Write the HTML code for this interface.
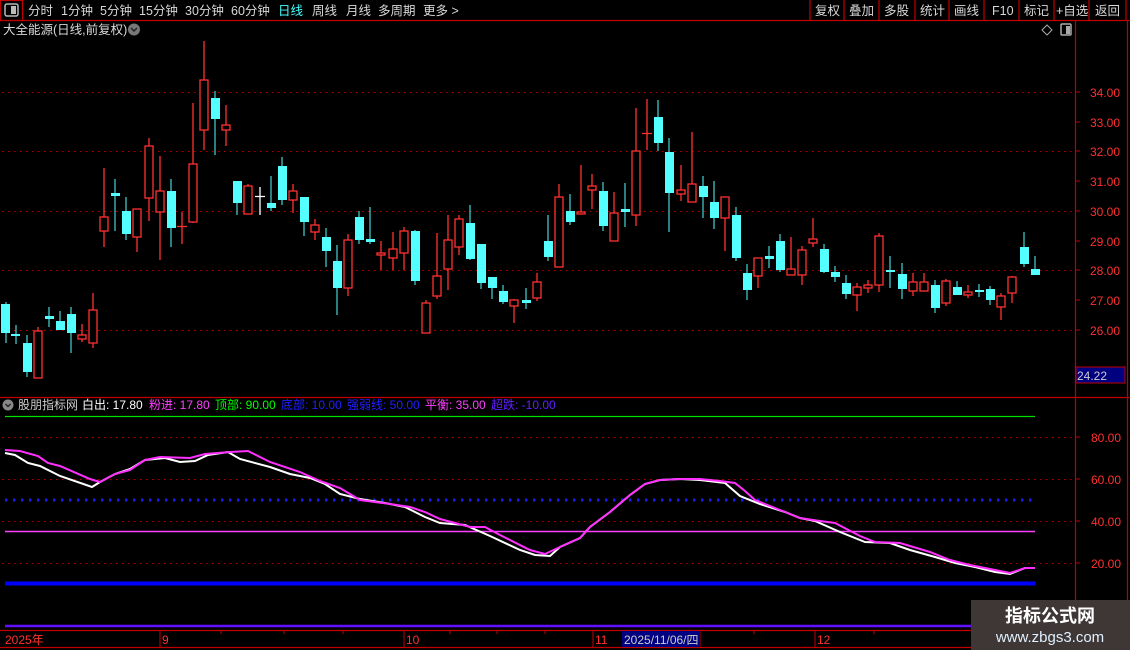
<!DOCTYPE html>
<html><head><meta charset="utf-8"><style>
body{margin:0;background:#000;width:1130px;height:650px;overflow:hidden;font-family:"Liberation Sans","Noto Sans CJK SC",sans-serif}
svg{display:block}
text{font-family:"Liberation Sans","Noto Sans CJK SC",sans-serif}
</style></head><body>
<svg width="1130" height="650" viewBox="0 0 1130 650" xmlns="http://www.w3.org/2000/svg">
<rect width="1130" height="650" fill="#000"/>
<!-- toolbar -->
<g stroke="#c00000" stroke-width="1.2" fill="none">
<line x1="0" y1="20.5" x2="1130" y2="20.5"/>
<rect x="0.5" y="0.5" width="22" height="20"/>
<line x1="810" y1="0" x2="810" y2="20"/><line x1="844" y1="0" x2="844" y2="20"/><line x1="879" y1="0" x2="879" y2="20"/><line x1="915" y1="0" x2="915" y2="20"/><line x1="949" y1="0" x2="949" y2="20"/><line x1="984" y1="0" x2="984" y2="20"/><line x1="1019" y1="0" x2="1019" y2="20"/><line x1="1054" y1="0" x2="1054" y2="20"/><line x1="1089" y1="0" x2="1089" y2="20"/><line x1="1126" y1="0" x2="1126" y2="20"/>
<line x1="1075.5" y1="20" x2="1075.5" y2="630"/>
<line x1="1127.5" y1="20" x2="1127.5" y2="630"/>
<line x1="0" y1="397.5" x2="1130" y2="397.5"/>
<line x1="0" y1="630.5" x2="1130" y2="630.5"/>
<line x1="0" y1="647.5" x2="1130" y2="647.5"/>
</g>
<rect x="5" y="4" width="13" height="12" rx="2" fill="none" stroke="#bbb" stroke-width="1.5"/><rect x="11" y="6" width="5" height="8" fill="#bbb"/>
<g font-size="12.5" fill="#d8d8d8">
<text x="28" y="15">分时</text><text x="61" y="15">1分钟</text><text x="100" y="15">5分钟</text><text x="139" y="15">15分钟</text><text x="185" y="15">30分钟</text><text x="231" y="15">60分钟</text><text x="278" y="15" fill="#4ff">日线</text><text x="312" y="15">周线</text><text x="346" y="15">月线</text><text x="378" y="15">多周期</text><text x="423" y="15">更多 &gt;</text>
<text x="815" y="15">复权</text><text x="849" y="15">叠加</text><text x="884" y="15">多股</text><text x="920" y="15">统计</text><text x="954" y="15">画线</text><text x="992" y="15">F10</text><text x="1024" y="15">标记</text><text x="1056" y="15">+自选</text><text x="1095" y="15">返回</text>
<text x="3" y="34">大全能源(日线,前复权)</text>
</g>
<circle cx="134" cy="29.5" r="6" fill="#777"/><path d="M131 28l3 3 3-3" stroke="#222" stroke-width="1.5" fill="none"/>
<path d="M1047 25l5 5-5 5-5-5z" fill="none" stroke="#aaa"/>
<rect x="1061" y="24" width="10" height="11" rx="1" fill="none" stroke="#aaa" stroke-width="1.5"/><rect x="1066" y="26" width="4" height="8" fill="#aaa"/>
<!-- price grid -->
<g stroke="#b00000" stroke-dasharray="1.5 4.5" stroke-width="1">
<line x1="2" y1="92.5" x2="1075" y2="92.5"/><line x1="2" y1="151.5" x2="1075" y2="151.5"/><line x1="2" y1="211.5" x2="1075" y2="211.5"/><line x1="2" y1="270.5" x2="1075" y2="270.5"/><line x1="2" y1="330.5" x2="1075" y2="330.5"/>
<line x1="2" y1="437.5" x2="1075" y2="437.5"/><line x1="2" y1="479.5" x2="1075" y2="479.5"/><line x1="2" y1="521.5" x2="1075" y2="521.5"/><line x1="2" y1="563.5" x2="1075" y2="563.5"/>
</g>
<g stroke="#c00000"><path d="M1075 92h5M1075 122h5M1075 151h5M1075 181h5M1075 211h5M1075 241h5M1075 270h5M1075 300h5M1075 330h5M1075 437h5M1075 479h5M1075 521h5M1075 563h5"/></g>
<g font-size="12" fill="#ff3030">
<text x="1090" y="97">34.00</text><text x="1090" y="127">33.00</text><text x="1090" y="156">32.00</text><text x="1090" y="186">31.00</text><text x="1090" y="216">30.00</text><text x="1090" y="246">29.00</text><text x="1090" y="275">28.00</text><text x="1090" y="305">27.00</text><text x="1090" y="335">26.00</text>
<text x="1091" y="442">80.00</text><text x="1091" y="484">60.00</text><text x="1091" y="526">40.00</text><text x="1091" y="568">20.00</text>
</g>
<rect x="1076" y="367" width="49" height="16" fill="#000080" stroke="#c00000"/>
<text x="1077" y="380" font-size="12" fill="#ccc">24.22</text>
<!-- cyan candles -->
<g stroke="#54ffff" stroke-width="1">
<path d="M6 302V343M16 325V344M27 335V377M49 307V327M60 311V330M71 307V353M115 179V231M126 197V240M171 179V247M215 91V155M237 181V215M271 176V211M282 157V205M304 197V236M326 228V267M337 245V315M359 211V244M370 207V244M415 230V285M470 205V260M481 244V289M492 277V299M503 285V304M526 288V309M548 215V261M570 194V225M603 182V231M625 183V227M658 100V151M669 138V232M703 176V218M714 181V229M736 207V261M747 264V300M769 246V268M780 234V272M824 244V273M835 266V282M846 275V299M890 256V288M902 263V299M935 280V313M957 281V295M979 284V297M990 286V305M1024 232V267M1035 256V275"/>
</g>
<g fill="#54ffff">
<rect x="1" y="304" width="9" height="29"/><rect x="11" y="334" width="9" height="2"/><rect x="23" y="343" width="9" height="29"/><rect x="45" y="316" width="9" height="3"/><rect x="56" y="321" width="9" height="9"/><rect x="67" y="314" width="9" height="19"/><rect x="111" y="193" width="9" height="3"/><rect x="122" y="211" width="9" height="23"/><rect x="167" y="191" width="9" height="37"/><rect x="211" y="98" width="9" height="21"/><rect x="233" y="181" width="9" height="22"/><rect x="267" y="203" width="9" height="5"/><rect x="278" y="166" width="9" height="34"/><rect x="300" y="197" width="9" height="25"/><rect x="322" y="237" width="9" height="14"/><rect x="333" y="261" width="9" height="27"/><rect x="355" y="217" width="9" height="23"/><rect x="366" y="239" width="9" height="3"/><rect x="411" y="231" width="9" height="50"/><rect x="466" y="223" width="9" height="36"/><rect x="477" y="244" width="9" height="39"/><rect x="488" y="277" width="9" height="11"/><rect x="499" y="291" width="9" height="11"/><rect x="522" y="300" width="9" height="3"/><rect x="544" y="241" width="9" height="16"/><rect x="566" y="211" width="9" height="11"/><rect x="599" y="191" width="9" height="35"/><rect x="621" y="209" width="9" height="3"/><rect x="654" y="117" width="9" height="26"/><rect x="665" y="152" width="9" height="41"/><rect x="699" y="186" width="9" height="11"/><rect x="710" y="202" width="9" height="16"/><rect x="732" y="215" width="9" height="43"/><rect x="743" y="273" width="9" height="17"/><rect x="765" y="256" width="9" height="3"/><rect x="776" y="241" width="9" height="29"/><rect x="820" y="249" width="9" height="23"/><rect x="831" y="272" width="9" height="5"/><rect x="842" y="283" width="9" height="11"/><rect x="886" y="270" width="9" height="2"/><rect x="898" y="274" width="9" height="15"/><rect x="931" y="285" width="9" height="23"/><rect x="953" y="287" width="9" height="8"/><rect x="975" y="290" width="9" height="2"/><rect x="986" y="289" width="9" height="11"/><rect x="1020" y="247" width="9" height="17"/><rect x="1031" y="269" width="9" height="6"/>
</g>
<!-- red candles -->
<g stroke="#ff3232" stroke-width="1.3">
<path d="M38 327V378M82 324V342M93 293V348M104 168V247M137 209V252M149 138V221M160 156V260M182 212V244M193 103V223M204 41V150M226 105V146M248 184V214M293 184V213M315 219V240M348 234V296M381 241V270M393 232V270M404 227V270M426 300V333M437 233V299M448 215V290M459 215V255M514 299V323M537 273V301M559 184V267M581 165V214M592 174V209M614 192V241M636 108V226M647 99V150M681 165V201M692 132V202M725 197V251M758 258V288M791 237V275M802 246V285M813 218V247M857 283V311M868 280V293M879 233V292M913 273V296M924 273V291M946 279V306M968 285V298M1001 293V320M1012 276V303"/>
<path d="M177 226.5h10M642 133.5h10"/>
</g>
<g stroke="#ff3232" stroke-width="1.3" fill="#000">
<rect x="34" y="331" width="8" height="47"/><rect x="78" y="335" width="8" height="4"/><rect x="89" y="310" width="8" height="33"/><rect x="100" y="217" width="8" height="14"/><rect x="133" y="209" width="8" height="28"/><rect x="145" y="146" width="8" height="52"/><rect x="156" y="191" width="8" height="21"/><rect x="189" y="164" width="8" height="58"/><rect x="200" y="80" width="8" height="50"/><rect x="222" y="125" width="8" height="5"/><rect x="244" y="186" width="8" height="28"/><rect x="289" y="191" width="8" height="9"/><rect x="311" y="225" width="8" height="7"/><rect x="344" y="240" width="8" height="48"/><rect x="377" y="253" width="8" height="2"/><rect x="389" y="249" width="8" height="9"/><rect x="400" y="231" width="8" height="22"/><rect x="422" y="303" width="8" height="30"/><rect x="433" y="276" width="8" height="20"/><rect x="444" y="240" width="8" height="29"/><rect x="455" y="219" width="8" height="28"/><rect x="510" y="300" width="8" height="6"/><rect x="533" y="282" width="8" height="16"/><rect x="555" y="197" width="8" height="70"/><rect x="577" y="212" width="8" height="2"/><rect x="588" y="186" width="8" height="4"/><rect x="610" y="213" width="8" height="28"/><rect x="632" y="151" width="8" height="64"/><rect x="677" y="190" width="8" height="4"/><rect x="688" y="184" width="8" height="18"/><rect x="721" y="197" width="8" height="21"/><rect x="754" y="258" width="8" height="18"/><rect x="787" y="269" width="8" height="6"/><rect x="798" y="250" width="8" height="25"/><rect x="809" y="239" width="8" height="4"/><rect x="853" y="287" width="8" height="8"/><rect x="864" y="285" width="8" height="3"/><rect x="875" y="236" width="8" height="49"/><rect x="909" y="282" width="8" height="9"/><rect x="920" y="282" width="8" height="9"/><rect x="942" y="281" width="8" height="22"/><rect x="964" y="292" width="8" height="3"/><rect x="997" y="296" width="8" height="11"/><rect x="1008" y="277" width="8" height="16"/>
</g>
<path d="M260 187V215M255 196.5h10" stroke="#fff" stroke-width="1.3"/>
<!-- indicator header -->
<circle cx="8" cy="405" r="5.5" fill="#888"/><path d="M5.5 404l2.5 2.5 2.5-2.5" stroke="#222" stroke-width="1.4" fill="none"/>
<text y="409" font-size="12"><tspan x="18" fill="#ccc">股朋指标网</tspan><tspan x="82" fill="#fff">白出: 17.80</tspan><tspan x="149" fill="#ff40ff">粉进: 17.80</tspan><tspan x="215" fill="#00ff00">顶部: 90.00</tspan><tspan x="281" fill="#2020ff">底部: 10.00</tspan><tspan x="347" fill="#2020ff">强弱线: 50.00</tspan><tspan x="425" fill="#ff40ff">平衡: 35.00</tspan><tspan x="491" fill="#6020ff">超跌: -10.00</tspan></text>
<!-- indicator lines -->
<line x1="5" y1="416.5" x2="1035" y2="416.5" stroke="#00e000" stroke-width="1.3"/>
<line x1="5" y1="500" x2="1035" y2="500" stroke="#1a1aff" stroke-width="3" stroke-dasharray="2.5 5.5"/>
<line x1="5" y1="531.5" x2="1035" y2="531.5" stroke="#ff40ff" stroke-width="1.5"/>
<line x1="5" y1="583.5" x2="1035" y2="583.5" stroke="#0000ff" stroke-width="4"/>
<line x1="5" y1="626" x2="1035" y2="626" stroke="#6010ff" stroke-width="2.5"/>
<polyline fill="none" stroke="#fff" stroke-width="2" points="5,453 15,455 28,463 40,466 60,476 92,487 100,482 115,474 130,469 145,460 165,458 180,462 195,461 208,455 228,452 240,459 270,467 290,474 310,478 325,484 340,494 360,499 385,503 405,507 425,517 440,523 465,525 490,536 520,550 535,555 550,556 560,547 580,538 590,527 610,512 630,495 645,484 660,480 680,479 700,480 725,483 740,496 760,504 785,512 800,518 815,521 840,532 865,542 890,543 910,550 935,557 955,563 975,567 995,572 1010,574 1025,568 1035,568"/>
<polyline fill="none" stroke="#ff30ff" stroke-width="2" points="5,450 20,451 38,456 48,463 60,466 90,479 100,482 115,474 130,470 145,460 160,457 190,458 205,454 230,452 248,451 270,462 300,472 320,481 340,488 360,500 390,504 410,507 425,512 440,519 470,527 485,527 500,535 530,550 545,554 560,547 580,538 590,527 610,512 630,495 645,484 660,480 680,479 700,479 720,481 735,483 745,491 755,500 775,508 800,518 820,521 835,523 860,536 875,542 900,543 930,552 950,560 970,565 990,569 1010,573 1025,568 1035,568"/>
<!-- time axis -->
<g stroke="#c00000"><path d="M160 631v16M404 631v16M593 631v16M700 631v16M815 631v16M221 631v3M284 631v3M343 631v3M450 631v3M497 631v3M545 631v3M754 631v3M874 631v3"/></g>
<rect x="622" y="631" width="78" height="16" fill="#000080"/>
<g font-size="12" fill="#ff3030"><text x="5" y="644">2025年</text><text x="162" y="644">9</text><text x="406" y="644">10</text><text x="595" y="644">11</text><text x="817" y="644">12</text></g>
<text x="624" y="644" font-size="12" fill="#ccc">2025/11/06/四</text>
<!-- watermark -->
<rect x="971" y="600" width="159" height="50" fill="#3e3735"/>
<text x="1050" y="622" font-size="18" font-weight="bold" fill="#fff" text-anchor="middle">指标公式网</text>
<text x="1050" y="642" font-size="15" fill="#e0f0ff" text-anchor="middle">www.zbgs3.com</text>
</svg>
</body></html>
